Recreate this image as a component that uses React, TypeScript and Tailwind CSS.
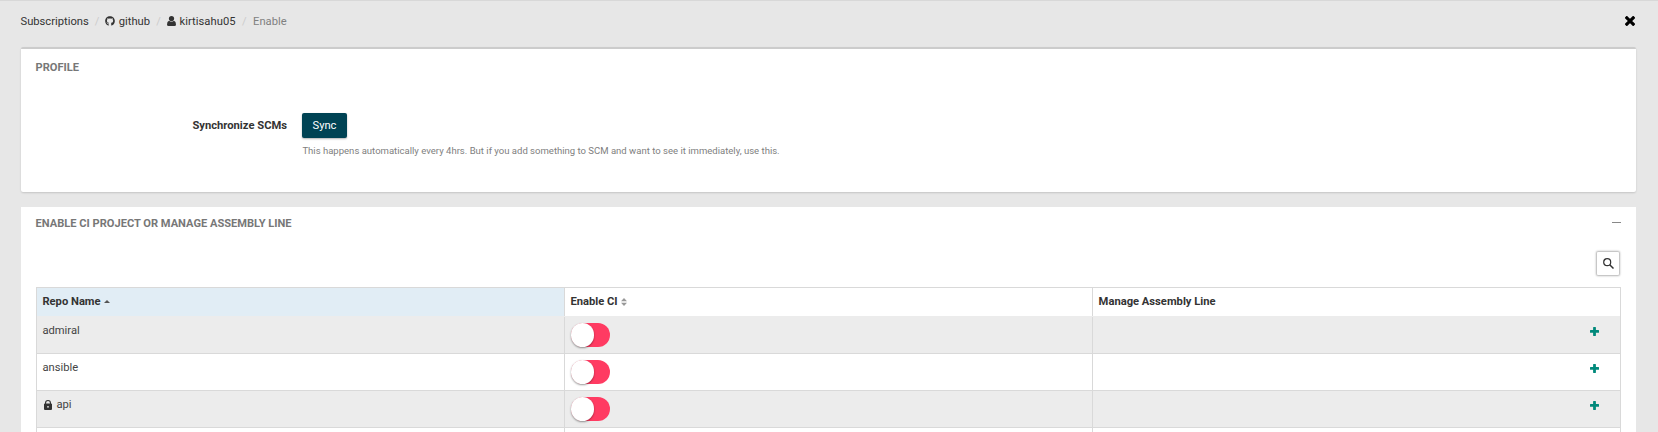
import { FaGithub } from "react-icons/fa";

function Plus() {
  return (
    <svg className="block h-[9px] w-[9px]" viewBox="0 0 9 9" fill="#00897b">
      <path d="M3.1 0.4Q3.1 0 3.5 0H5.5Q5.9 0 5.9 0.4V3.1H8.6Q9 3.1 9 3.5V5.4Q9 5.8 8.6 5.8H5.9V8.6Q5.9 9 5.5 9H3.5Q3.1 9 3.1 8.6V5.8H0.4Q0 5.8 0 5.4V3.5Q0 3.1 0.4 3.1H3.1Z" />
    </svg>
  );
}

function Lock() {
  return (
    <svg className="ml-[1.6px] mr-[4.4px] mt-[4px] block h-[10px] w-2" viewBox="0 0 16 20" fill="#333">
      <path fillRule="evenodd" d="M2 7V6a6 6 0 0 1 12 0v1h.3A1.7 1.7 0 0 1 16 8.700V18a2 2 0 0 1-2 2H2a2 2 0 0 1-2-2V8.700A1.700 1.700 0 0 1 1.700 7zM4.200 7h7.600V6a3.800 3.800 0 0 0-7.600 0zM8 11.800a1.800 1.800 0 1 0 0 3.600 1.800 1.800 0 0 0 0-3.600z" />
    </svg>
  );
}

function Slash({ className = "w-[16.5px]" }: { className?: string }) {
  return <span className={`text-center text-[#ccc] ${className}`}>/</span>;
}

const rows = [
  { name: "admiral", locked: false, style: "border-[#ececec] bg-[#ececec]" },
  { name: "ansible", locked: false, style: "border-[#d9d9d9] bg-white" },
  { name: "api", locked: true, style: "border-[#d9d9d9] bg-[#ececec]" },
  { name: "", locked: false, style: "border-[#d9d9d9] bg-white" },
];

export default function App() {
  return (
    <div className="h-[432px] overflow-hidden border-t border-[#d8d8d8] bg-[#e7e7e7] pl-[21px] pr-[22px] font-['Roboto',sans-serif] text-[11.2px] leading-[18px] text-[#333]">
      <header className="flex h-[46px] items-start justify-between pt-[11px]">
        <nav className="-ml-[0.5px] flex pt-[1px]">
          <span>Subscriptions</span>
          <Slash />
          <FaGithub className="mr-[3.5px] mt-[3px] h-[10px] w-[10px]" />
          <span>github</span>
          <Slash className="w-[17px]" />
          <svg className="mr-[3.5px] mt-[3px] h-[10px] w-[9px]" viewBox="0 0 9 10" fill="#333">
            <circle cx="4.500" cy="2.600" r="2.600" />
            <path d="M2 4.800Q4.500 6.600 7 4.800Q9 5.400 9 8.500Q9 10 7.500 10H1.500Q0 10 0 8.500Q0 5.400 2 4.800Z" />
          </svg>
          <span className="tracking-[0.04px]">kirtisahu05</span>
          <Slash className="w-[17.5px]" />
          <span className="text-[#808080]">Enable</span>
        </nav>
        <svg className="mr-[1px] mt-1 h-[10px] w-[10px]" viewBox="0 0 10 10">
          <path d="M1.800 1.800L8.200 8.200M8.200 1.800L1.800 8.200" stroke="#000" strokeWidth="3.100" strokeLinecap="square" />
        </svg>
      </header>

      <section className="h-[145px] rounded-[2px] border-t-2 border-[#ccc] bg-white px-[14px] pt-[10px] shadow-[0_1px_2px_rgba(0,0,0,0.15)]">
        <h2 className="pl-[0.6px] text-[11.1px] font-bold text-[#777]">PROFILE</h2>
        <div className="mt-9 flex">
          <div className="w-[252px] pt-[4px] text-right font-bold">Synchronize SCMs</div>
          <div className="ml-[15px]">
            <button className="block h-[25px] w-[45px] rounded-[2px] bg-[#004354] text-[11.2px] text-white shadow-[0_1px_2px_rgba(0,0,0,0.3)]">Sync</button>
            <p className="mt-1 pl-[0.4px] text-[9.54px] text-[#808080]">
              This happens automatically every 4hrs. But if you add something to SCM and want to see it immediately, use this.
            </p>
          </div>
        </div>
      </section>

      <section className="mt-[15px] bg-white pl-[14px] pr-[15px] pt-[8px]">
        <div className="flex justify-between">
          <h2 className="pl-[0.6px] text-[11.1px] font-bold text-[#777]">ENABLE CI PROJECT OR MANAGE ASSEMBLY LINE</h2>
          <div className="mt-[7px] h-[1px] w-[9px] bg-[#888]" />
        </div>
        <div className="mt-[19px] flex justify-end pr-[2px]">
          <button className="flex h-[23px] w-[22px] items-center justify-center rounded-[1px] bg-white shadow-[0_0_2px_1px_rgba(0,0,0,0.3)]">
            <svg className="h-[11px] w-[11px]" viewBox="0 0 11 11" fill="none" stroke="#333">
              <circle cx="4.200" cy="4.200" r="3.500" strokeWidth="1.200" />
              <path d="M6.700 6.700L10.500 10.500" strokeWidth="1.500" />
            </svg>
          </button>
        </div>
        <div className="ml-[1px] mt-3 border-x border-t border-[#d9d9d9]">
          <div className="grid h-7 grid-cols-[528px_528px_1fr] font-bold leading-[27px]">
            <div className="flex border-r border-[#d9d9d9] bg-[#e1edf5] pl-[5.4px]">
              Repo Name
              <svg className="ml-[3px] mt-[12px] h-[3px] w-[6px]" viewBox="0 0 6 3" fill="#555"><path d="M0 3L3 0L6 3Z" /></svg>
            </div>
            <div className="flex border-r border-[#d9d9d9] pl-[5.4px]">
              Enable CI
              <svg className="ml-[3px] mt-[10px] h-[8px] w-[6px]" viewBox="0 0 6 8" fill="#999"><path d="M0 3.300L3 0L6 3.300ZM0 4.700L3 8L6 4.700Z" /></svg>
            </div>
            <div className="pl-[5.6px]">Manage Assembly Line</div>
          </div>
          {rows.map((row, i) => (
            <div key={i} className={`grid h-[37px] grid-cols-[528px_528px_1fr] border-t ${row.style}`}>
              <div className="flex border-r border-[#d9d9d9] pl-[5.4px] pt-[5px] text-[#444]">
                {row.locked && <Lock />}
                {row.name}
              </div>
              <div className="border-r border-[#d9d9d9] pl-[5.5px] pt-[6px]">
                <div className="h-6 w-[39px] rounded-full bg-[#ff3b62]">
                  <div className="h-6 w-[23px] rounded-full bg-white shadow-[0_1px_2px_rgba(0,0,0,0.4)]" />
                </div>
              </div>
              <div className="flex justify-end pr-[21px] pt-[10px]">
                <Plus />
              </div>
            </div>
          ))}
        </div>
      </section>
    </div>
  );
}
